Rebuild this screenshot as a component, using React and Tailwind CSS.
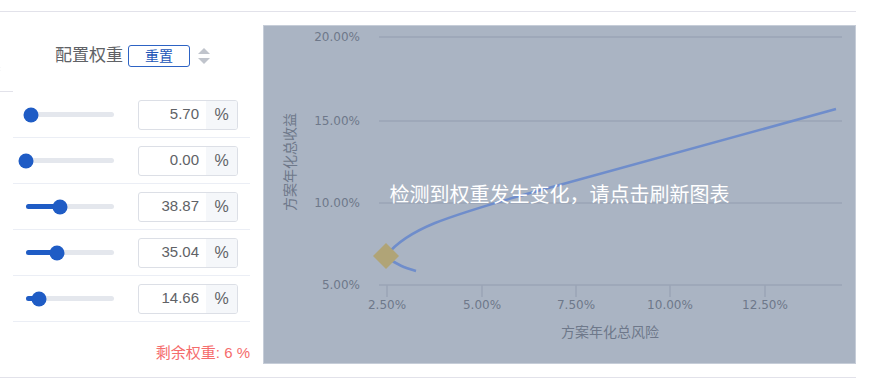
import React from 'react';

const cjk = { fontFamily: '"Liberation Sans", "Noto Sans CJK SC", sans-serif' };
const chartFont = '"DejaVu Sans", "Noto Sans CJK SC", sans-serif';

const weights = [5.7, 0, 38.87, 35.04, 14.66];

const SortIcon = ({ className }) => (
  <svg viewBox="0 0 12 16" className={className}>
    <path d="M6 0 L12 6 L0 6 Z" fill="#c0c4cc" />
    <path d="M6 16 L12 10 L0 10 Z" fill="#c0c4cc" />
  </svg>
);

const WeightRow = ({ value }) => (
  <div className="h-[46px] flex items-center border-b border-[#ebeef5] ml-[13px] pl-[13px]">
    <div className="relative w-[88px] h-[5px] rounded-full bg-[#e4e7ed]">
      <div className="absolute left-0 top-0 h-full rounded-full bg-[#1f5cc5]" style={{ width: `${value}%` }} />
      <div
        className="absolute top-1/2 w-[15px] h-[15px] rounded-full bg-[#1f5cc5] -translate-x-1/2 -translate-y-1/2"
        style={{ left: `${value}%` }}
      />
    </div>
    <div className="ml-[24px] w-[100px] h-[30px] flex border border-[#dcdfe6] rounded-[3px] overflow-hidden bg-white">
      <div className="flex-1 flex items-center justify-end pr-[7px] text-[15px] text-[#606266]">{value.toFixed(2)}</div>
      <div className="w-[31px] flex items-center justify-center bg-[#f5f7fa] text-[16px] text-[#606266]">%</div>
    </div>
  </div>
);

const Chart = () => {
  const gridY = [
    { y: 12, label: '20.00%' },
    { y: 96, label: '15.00%' },
    { y: 178, label: '10.00%' },
    { y: 260, label: '5.00%' },
  ];
  const ticks = [
    { x: 124, label: '2.50%' },
    { x: 219, label: '5.00%' },
    { x: 313, label: '7.50%' },
    { x: 407, label: '10.00%' },
    { x: 502, label: '12.50%' },
  ];
  return (
    <div className="relative mt-[13px] w-[593px] h-[339px] bg-[#aab4c3] border border-[#c6cdd8]">
      <svg width="593" height="339" className="absolute left-[-1px] top-[-1px]" style={{ fontFamily: chartFont }}>
        {gridY.map((g) => (
          <g key={g.label}>
            <line x1="116" x2="579" y1={g.y} y2={g.y} stroke="#9aa5b6" strokeWidth="1.5" />
            <text x="97" y={g.y + 4} textAnchor="end" fontSize="12" fill="#6e788a">{g.label}</text>
          </g>
        ))}
        {ticks.map((t) => (
          <g key={t.label}>
            <line x1={t.x} x2={t.x} y1="260" y2="272" stroke="#9aa5b6" strokeWidth="1.5" />
            <text x={t.x} y="284" textAnchor="middle" fontSize="12" fill="#6e788a">{t.label}</text>
          </g>
        ))}
        <text x="347" y="312" textAnchor="middle" fontSize="14" fill="#6e788a">方案年化总风险</text>
        <text x="0" y="0" transform="translate(32 137) rotate(-90)" textAnchor="middle" fontSize="14" fill="#6e788a">方案年化总收益</text>
        <path
          d="M123 231 C133 218 150 207 172 198 C200 187 225 180 260 170 L573 84"
          fill="none"
          stroke="#6f8dcb"
          strokeWidth="2.5"
        />
        <path d="M123 231 C133 240 143 243 153 246" fill="none" stroke="#6f8dcb" strokeWidth="2.5" />
        <path d="M123 218 L136 231 L123 244 L110 231 Z" fill="#b0a477" />
      </svg>
      <div className="absolute inset-0 flex items-center justify-center text-white text-[20px]" style={cjk}>
        检测到权重发生变化，请点击刷新图表
      </div>
    </div>
  );
};

export default function App() {
  return (
    <div className="w-[869px] h-[384px] bg-white overflow-hidden" style={cjk}>
      <div className="mt-[11px] w-[856px] border-t border-[#e2e2ea] flex">
        <div className="w-[250px] shrink-0">
          <div className="relative h-[80px] flex items-center pt-[8px] pl-[55px]">
            <SortIcon className="absolute left-[-10px] top-[51px] w-[12px] h-[12px]" />
            <div className="absolute left-0 bottom-0 w-[13px] border-b border-[#e2e2ea]" />
            <span className="text-[17px] text-[#606266]">配置权重</span>
            <button className="ml-[5px] w-[62px] h-[22px] border border-[#2d63c4] rounded-[3px] text-[14px] leading-none text-[#2256b8]">
              重置
            </button>
            <SortIcon className="ml-[8px] w-[12px] h-[16px]" />
          </div>
          {weights.map((w, i) => (
            <WeightRow key={i} value={w} />
          ))}
          <div className="h-[55px] flex items-end justify-end pb-[13px] text-[15px] text-[#f56c6c]">
            剩余权重: 6 %
          </div>
        </div>
        <div className="ml-[13px]">
          <Chart />
        </div>
      </div>
      <div className="w-[856px] border-t border-[#e2e2ea]" />
    </div>
  );
}
